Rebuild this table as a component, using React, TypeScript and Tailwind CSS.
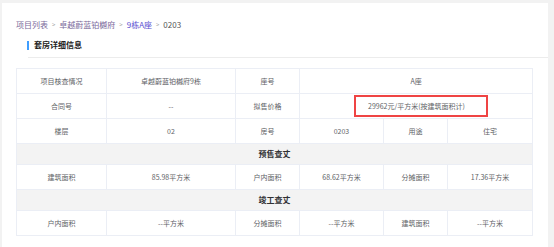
const font = { fontFamily: '"Noto Sans CJK SC", "Noto Sans", sans-serif' };

function Cell({ children, span = 1 }: { children: React.ReactNode; span?: number }) {
  return (
    <td colSpan={span} className="border border-[#ebeef5] text-center text-[7px] text-[#606266] h-[25px] p-0">
      {children}
    </td>
  );
}

function Section({ title }: { title: string }) {
  return (
    <tr>
      <td colSpan={6} className="border border-[#ebeef5] bg-[#f3f3f3] text-center text-[8px] font-bold text-[#303133] h-[21px] p-0">
        {title}
      </td>
    </tr>
  );
}

export default function App() {
  return (
    <div className="w-[554px] h-[247px] bg-[#f2f2f2] pt-[3px] pl-[2px] pr-[6px] overflow-hidden" style={font}>
      <div className="bg-white h-full">
        <div className="pt-[16px] pl-[14px] h-[28px] flex items-center gap-[4px] text-[8px] leading-[12px]">
          <span className="text-[#7b6a9b]">项目列表</span>
          <span className="text-[#999] text-[6px]">&gt;</span>
          <span className="text-[#7b6a9b]">卓越蔚蓝铂樾府</span>
          <span className="text-[#999] text-[6px]">&gt;</span>
          <span className="text-[#5b4fd1]">9栋A座</span>
          <span className="text-[#999] text-[6px]">&gt;</span>
          <span className="text-[#555]">0203</span>
        </div>
        <div className="ml-[26px] mt-[8px] pb-[6px] border-b border-[#ececec]">
          <div className="flex items-center h-[12px]">
            <div className="w-[2px] h-[9px] bg-[#409eff] ml-[-1px]" />
            <span className="ml-[5px] text-[8px] font-bold text-[#222] leading-[12px]">套房详细信息</span>
          </div>
        </div>
        <table className="ml-[14px] mt-[10px] w-[516px] border-collapse table-fixed">
          <colgroup>
            <col className="w-[90px]" />
            <col className="w-[129px]" />
            <col className="w-[64px]" />
            <col className="w-[84px]" />
            <col className="w-[64px]" />
            <col className="w-[85px]" />
          </colgroup>
          <tbody>
            <tr>
              <Cell>项目核查情况</Cell>
              <Cell>卓越蔚蓝铂樾府9栋</Cell>
              <Cell>座号</Cell>
              <Cell span={3}>A座</Cell>
            </tr>
            <tr>
              <Cell>合同号</Cell>
              <Cell>--</Cell>
              <Cell>拟售价格</Cell>
              <Cell span={3}>
                <div className="flex justify-center">
                  <div className="ml-[10px] w-[134px] h-[22px] border-2 border-[#ef4444] flex items-center pl-[12px]">
                    29962元/平方米(按建筑面积计)
                  </div>
                </div>
              </Cell>
            </tr>
            <tr>
              <Cell>楼层</Cell>
              <Cell>02</Cell>
              <Cell>房号</Cell>
              <Cell>0203</Cell>
              <Cell>用途</Cell>
              <Cell>住宅</Cell>
            </tr>
            <Section title="预售查丈" />
            <tr>
              <Cell>建筑面积</Cell>
              <Cell>85.98平方米</Cell>
              <Cell>户内面积</Cell>
              <Cell>68.62平方米</Cell>
              <Cell>分摊面积</Cell>
              <Cell>17.36平方米</Cell>
            </tr>
            <Section title="竣工查丈" />
            <tr>
              <Cell>户内面积</Cell>
              <Cell>--平方米</Cell>
              <Cell>分摊面积</Cell>
              <Cell>--平方米</Cell>
              <Cell>建筑面积</Cell>
              <Cell>--平方米</Cell>
            </tr>
          </tbody>
        </table>
      </div>
    </div>
  );
}
